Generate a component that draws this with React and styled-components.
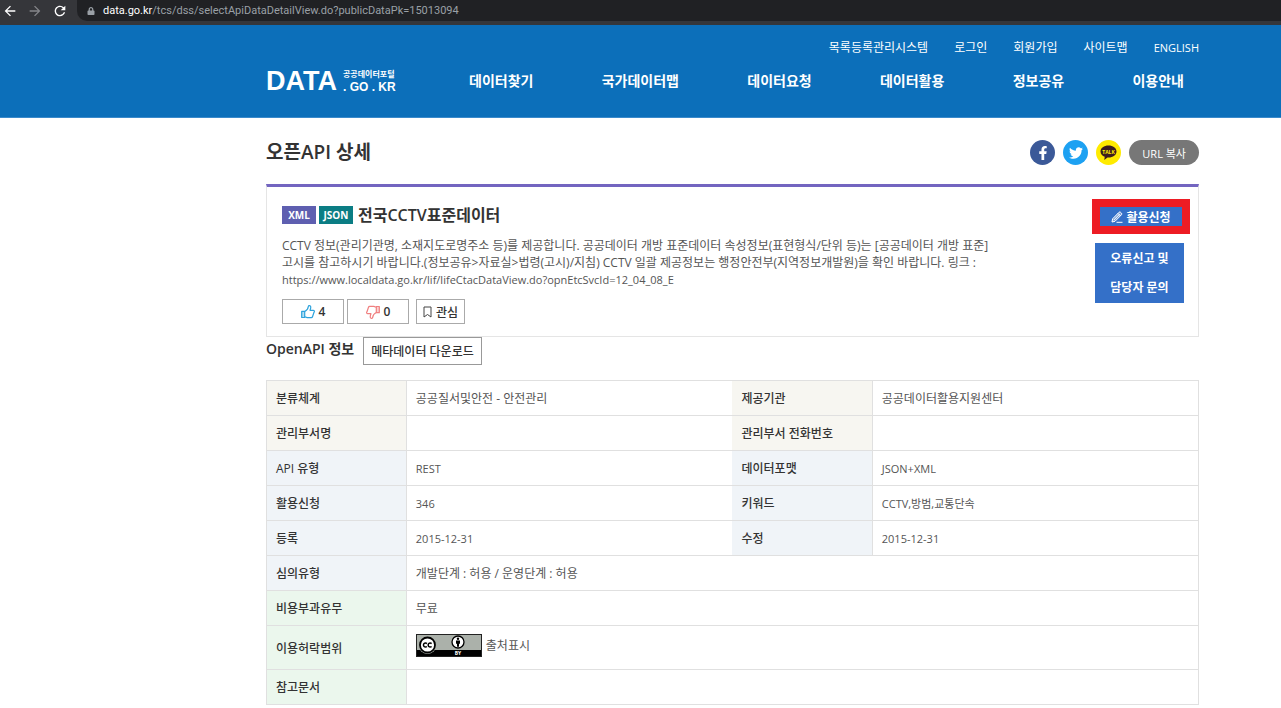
import React from "react";
import styled, { createGlobalStyle } from "styled-components";
import { FaFacebookF, FaTwitter, FaLock } from "react-icons/fa";
import { MdArrowBack, MdArrowForward, MdRefresh } from "react-icons/md";

const GlobalStyle = createGlobalStyle`
  * {
    box-sizing: border-box;
  }
  body {
    margin: 0;
    background: #fff;
    color: #333;
    font-family: "Open Sans", "Noto Sans CJK KR", sans-serif;
    font-size: 12px;
    line-height: 18px;
  }
  button {
    font-family: inherit;
    cursor: pointer;
  }
  a {
    color: inherit;
    text-decoration: none;
  }
`;

const utilLinks = ["목록등록관리시스템", "로그인", "회원가입", "사이트맵", "ENGLISH"];
const menus = ["데이터찾기", "국가데이터맵", "데이터요청", "데이터활용", "정보공유", "이용안내"];

const rows = [
  { tone: "beige", cells: [["분류체계", "공공질서및안전 - 안전관리"], ["제공기관", "공공데이터활용지원센터"]] },
  { tone: "beige", cells: [["관리부서명", ""], ["관리부서 전화번호", ""]] },
  { tone: "blue", latin: true, cells: [["API 유형", "REST"], ["데이터포맷", "JSON+XML"]] },
  { tone: "blue", latin: true, cells: [["활용신청", "346"], ["키워드", "CCTV,방범,교통단속"]] },
  { tone: "blue", latin: true, cells: [["등록", "2015-12-31"], ["수정", "2015-12-31"]] },
  { tone: "blue", cells: [["심의유형", "개발단계 : 허용 / 운영단계 : 허용"]] },
  { tone: "green", cells: [["비용부과유무", "무료"]] },
  { tone: "green", tall: true, cells: [["이용허락범위", <License key="license" />]] },
  { tone: "green", cells: [["참고문서", ""]] },
];

const tones = {
  beige: "#f7f6f1",
  blue: "#f0f4f8",
  green: "#ebf7ed",
};

function License() {
  return (
    <LicenseWrapper>
      <svg width="66" height="23" viewBox="0 0 66 23" aria-hidden="true">
        <rect width="66" height="23" fill="#222" />
        <rect x="1" y="1" width="64" height="15" fill="#abb1aa" />
        <rect x="1" y="16" width="64" height="6" fill="#000" />
        <circle cx="11.5" cy="11" r="9" fill="#abb1aa" />
        <circle cx="11.5" cy="11" r="7.5" fill="#fff" stroke="#000" strokeWidth="1.8" />
        <g fill="none" stroke="#000" strokeWidth="1.5">
          <path d="M10.9 9.6a2 2 0 1 0 0 2.8" />
          <path d="M15.6 9.6a2 2 0 1 0 0 2.8" />
        </g>
        <circle cx="42" cy="8" r="6" fill="#fff" stroke="#000" strokeWidth="1.3" />
        <circle cx="42" cy="4.7" r="1.2" fill="#000" />
        <path d="M40 6.4h4v3.4h-1v3h-2v-3h-1z" fill="#000" />
        <text x="42" y="21" textAnchor="middle" fontSize="5" fontWeight="bold" fill="#fff">
          BY
        </text>
      </svg>
      출처표시
    </LicenseWrapper>
  );
}

const Thumb = ({ color, down }) => (
  <svg width="14" height="14" viewBox="0 0 14 14" aria-hidden="true">
    <g
      transform={down ? "rotate(180 7 7)" : undefined}
      fill="none"
      stroke={color}
      strokeWidth="1.2"
      strokeLinejoin="round"
    >
      <path d="M.7 6.3h3v6.2h-3z" fill={color} fillOpacity=".35" />
      <path d="M3.7 6.5c2-.8 3.4-2.6 3.7-5.2.2-1 2-1 2.3.4.2 1.1-.2 2.4-.7 3.6h3.2c1.4 0 1.4 1.4.8 2l-1.5 4.5c-.2.6-.6.8-1.2.8H6.2l-2.5-.8" />
    </g>
  </svg>
);

const Pencil = () => (
  <svg width="12" height="12" viewBox="0 0 12 12" aria-hidden="true">
    <path
      d="M1 11l.6-3.2L8 1.3q.8-.7 1.6 0l.9.9q.7.7 0 1.5L4 10.3z"
      fill="#fff"
      fillOpacity=".35"
      stroke="#fff"
    />
    <path d="M2.8 9l5.8-5.8M7 2.4l2.6 2.6M5.5 11.3h6" stroke="#fff" fill="none" />
  </svg>
);

const App = () => {
  return (
    <>
      <GlobalStyle />
      <BrowserBar>
        <BarButton aria-label="Back">
          <MdArrowBack />
        </BarButton>
        <BarButton aria-label="Forward" $dim>
          <MdArrowForward />
        </BarButton>
        <BarButton aria-label="Reload">
          <MdRefresh />
        </BarButton>
        <Address>
          <FaLock />
          <span>
            <b>data.go.kr</b>/tcs/dss/selectApiDataDetailView.do?publicDataPk=15013094
          </span>
        </Address>
      </BrowserBar>

      <Header>
        <UtilNav>
          {utilLinks.map((label) => (
            <a href="#" key={label}>
              {label}
            </a>
          ))}
        </UtilNav>
        <MainNav>
          <Logo href="#">
            <LogoName>DATA</LogoName>
            <LogoSide>
              <small>공공데이터포털</small>
              <span>. GO . KR</span>
            </LogoSide>
          </Logo>
          <Menu>
            {menus.map((label) => (
              <a href="#" key={label}>
                {label}
              </a>
            ))}
          </Menu>
        </MainNav>
      </Header>

      <Main>
        <TitleRow>
          <PageTitle>오픈API 상세</PageTitle>
          <Share>
            <Social $bg="#3b5998" aria-label="Facebook">
              <FaFacebookF size={14} />
            </Social>
            <Social $bg="#1da1f2" aria-label="Twitter">
              <FaTwitter size={14} />
            </Social>
            <Social $bg="#ffeb00" aria-label="KakaoTalk">
              <svg width="17" height="17" viewBox="0 0 17 17" aria-hidden="true">
                <path
                  d="M8.5 1.5c4.5 0 8 2.5 8 6s-3.5 6-8 6h-1l-3.2 2.5.4-3.2C2.3 11.800.5 9.900.5 7.500c0-3.500 3.500-6 8-6z"
                  fill="#3c1e1e"
                />
                <text x="8.5" y="9.5" textAnchor="middle" fontSize="5" fontWeight="bold" fill="#ffeb00">
                  TALK
                </text>
              </svg>
            </Social>
            <CopyButton>URL 복사</CopyButton>
          </Share>
        </TitleRow>

        <Summary>
          <SummaryBody>
            <DataTitle>
              <Badge $bg="#5e5fb0">XML</Badge>
              <Badge $bg="#0b7d84">JSON</Badge>
              <h2>전국CCTV표준데이터</h2>
            </DataTitle>
            <Description>
              CCTV 정보(관리기관명, 소재지도로명주소 등)를 제공합니다. 공공데이터 개방 표준데이터
              속성정보(표현형식/단위 등)는 [공공데이터 개방 표준]
              <br />
              고시를 참고하시기 바랍니다.(정보공유&gt;자료실&gt;법령(고시)/지침) CCTV 일괄
              제공정보는 행정안전부(지역정보개발원)을 확인 바랍니다. 링크 :
              <br />
              <small>https://www.localdata.go.kr/lif/lifeCtacDataView.do?opnEtcSvcId=12_04_08_E</small>
            </Description>
            <Votes>
              <VoteButton>
                <Thumb color="#2ea3dc" />4
              </VoteButton>
              <VoteButton>
                <Thumb color="#f08080" down />0
              </VoteButton>
              <MarkButton>
                <svg width="9" height="12" viewBox="0 0 9 12" aria-hidden="true">
                  <path d="M1 1h7v10L4.5 8.500 1 11z" fill="none" stroke="#444" />
                </svg>
                관심
              </MarkButton>
            </Votes>
          </SummaryBody>
          <Actions>
            <ApplyButton>
              <Pencil />
              활용신청
            </ApplyButton>
            <ReportButton>
              오류신고 및<br />
              담당자 문의
            </ReportButton>
          </Actions>
        </Summary>

        <InfoHead>
          <h3>OpenAPI 정보</h3>
          <MetaButton>메타데이터 다운로드</MetaButton>
        </InfoHead>

        <InfoTable>
          <colgroup>
            <col width="15%" />
            <col width="35%" />
            <col width="15%" />
            <col width="35%" />
          </colgroup>
          <tbody>
            {rows.map(({ tone, tall, latin, cells }) => (
              <Row key={cells[0][0]} $tall={tall}>
                {cells.map(([label, value]) => (
                  <React.Fragment key={label}>
                    <Label scope="row" $tone={tone}>
                      {label}
                    </Label>
                    <Value colSpan={cells.length === 1 ? 3 : 1} $latin={latin}>
                      {value}
                    </Value>
                  </React.Fragment>
                ))}
              </Row>
            ))}
          </tbody>
        </InfoTable>
      </Main>
    </>
  );
};

const BrowserBar = styled.div`
  display: flex;
  align-items: center;
  height: 25px;
  padding: 0 0 4px 2px;
  gap: 9px;
  background: #35363a;
`;

const BarButton = styled.button`
  display: flex;
  padding: 0;
  border: 0;
  background: none;
  color: ${({ $dim }) => ($dim ? "#85868a" : "#fff")};
  font-size: 16px;
`;

const Address = styled.div`
  display: flex;
  flex: 1;
  align-items: center;
  gap: 8px;
  height: 21px;
  padding-left: 10px;
  border-radius: 0 0 0 10px;
  background: #202124;
  color: #9aa0a6;
  font-family: Roboto, sans-serif;
  font-size: 11px;
  svg {
    font-size: 8px;
  }
  b {
    color: #fff;
    font-weight: normal;
  }
`;

const Header = styled.header`
  padding: 14px 82px 21px 266px;
  border-bottom: 1px solid #3b8acb;
  background: #0c6fba;
  color: #fff;
`;

const UtilNav = styled.nav`
  display: flex;
  justify-content: flex-end;
  gap: 26px;
  a:last-child {
    font-size: 11px;
  }
`;

const MainNav = styled.div`
  display: flex;
  align-items: center;
  margin-top: 9px;
`;

const Logo = styled.a`
  display: flex;
  align-items: center;
  gap: 6px;
  width: 203px;
  font-family: "Liberation Sans", "Noto Sans CJK KR", sans-serif;
  font-weight: bold;
`;

const LogoName = styled.span`
  font-size: 27px;
  line-height: 30px;
`;

const LogoSide = styled.span`
  display: flex;
  flex-direction: column;
  font-size: 12px;
  line-height: 13px;
  white-space: nowrap;
  small {
    font-size: 8px;
    line-height: 12px;
  }
`;

const Menu = styled.nav`
  display: flex;
  flex: 1;
  justify-content: space-between;
  padding-right: 15px;
  font-size: 14px;
  font-weight: bold;
  line-height: 20px;
`;

const Main = styled.main`
  padding: 0 82px 4px 266px;
`;

const TitleRow = styled.div`
  display: flex;
  align-items: center;
  justify-content: space-between;
  padding: 20px 0 17px;
`;

const PageTitle = styled.h1`
  margin: 0 0 1px;
  font-size: 19px;
  font-weight: 600;
  line-height: 28px;
`;

const Share = styled.div`
  display: flex;
  gap: 8px;
`;

const Social = styled.button`
  display: flex;
  align-items: center;
  justify-content: center;
  width: 25px;
  height: 25px;
  padding: 0;
  border: 0;
  border-radius: 50%;
  background: ${({ $bg }) => $bg};
  color: #fff;
`;

const CopyButton = styled.button`
  height: 25px;
  padding: 0 13px;
  border: 0;
  border-radius: 13px;
  background: #777;
  color: #fff;
  font-size: 11px;
`;

const Summary = styled.section`
  display: flex;
  justify-content: space-between;
  padding: 12px 8px 12px 15px;
  border: 1px solid #e5e5e5;
  border-top: 3px solid #7365c0;
`;

const SummaryBody = styled.div`
  padding-top: 5px;
`;

const DataTitle = styled.div`
  display: flex;
  align-items: center;
  gap: 3px;
  h2 {
    margin: 0 0 0 2px;
    font-size: 16px;
    font-weight: 600;
    line-height: 22px;
  }
`;

const Badge = styled.span`
  width: 34px;
  background: ${({ $bg }) => $bg};
  color: #fff;
  font-size: 10px;
  font-weight: bold;
  line-height: 18px;
  text-align: center;
`;

const Description = styled.p`
  margin: 11px 0;
  color: #555;
  line-height: 17px;
  small {
    font-size: 11px;
  }
`;

const Votes = styled.div`
  display: flex;
  gap: 3px;
`;

const VoteButton = styled.button`
  display: flex;
  align-items: center;
  justify-content: center;
  gap: 4px;
  width: 62px;
  height: 25px;
  padding: 0;
  border: 1px solid #aaa;
  background: #fff;
  color: #333;
  font-size: 12px;
  font-weight: 600;
`;

const MarkButton = styled(VoteButton)`
  width: 49px;
  margin-left: 4px;
  font-weight: 500;
`;

const Actions = styled.div`
  display: flex;
  flex-direction: column;
  align-items: flex-start;
  gap: 9px;
`;

const ApplyButton = styled.button`
  display: flex;
  align-items: center;
  justify-content: center;
  gap: 3px;
  width: 98px;
  height: 35px;
  padding: 0;
  border: 8px solid #ed1c24;
  background: #3470c8;
  color: #fff;
  font-size: 12px;
  font-weight: 600;
`;

const ReportButton = styled.button`
  width: 89px;
  margin-left: 3px;
  padding: 0;
  border: 1px solid #3470c8;
  background: #3470c8;
  color: #fff;
  font-size: 12px;
  font-weight: 600;
  line-height: 29px;
`;

const InfoHead = styled.div`
  display: flex;
  align-items: flex-start;
  gap: 9px;
  margin-bottom: 15px;
  h3 {
    margin: 0;
    font-size: 14px;
    font-weight: 600;
    line-height: 24px;
  }
`;

const MetaButton = styled.button`
  height: 28px;
  padding: 0 7px;
  border: 1px solid #999;
  background: #fff;
  color: #333;
  font-size: 12px;
  font-weight: 500;
`;

const InfoTable = styled.table`
  width: 100%;
  border: 1px solid #e0e0e0;
  border-collapse: collapse;
  table-layout: fixed;
`;

const Row = styled.tr`
  height: ${({ $tall }) => ($tall ? "44px" : "35px")};
  border-bottom: 1px solid #e0e0e0;
`;

const Label = styled.th`
  padding: 2px 9px 0;
  border-right: 1px solid #e0e0e0;
  background: ${({ $tone }) => tones[$tone]};
  font-weight: 500;
  text-align: left;
`;

const Value = styled.td`
  padding: 2px 9px 0;
  color: #555;
  font-size: ${({ $latin }) => ($latin ? "11px" : "12px")};
`;

const LicenseWrapper = styled.span`
  display: flex;
  align-items: center;
  gap: 4px;
  padding-bottom: 6px;
`;

export default App;
